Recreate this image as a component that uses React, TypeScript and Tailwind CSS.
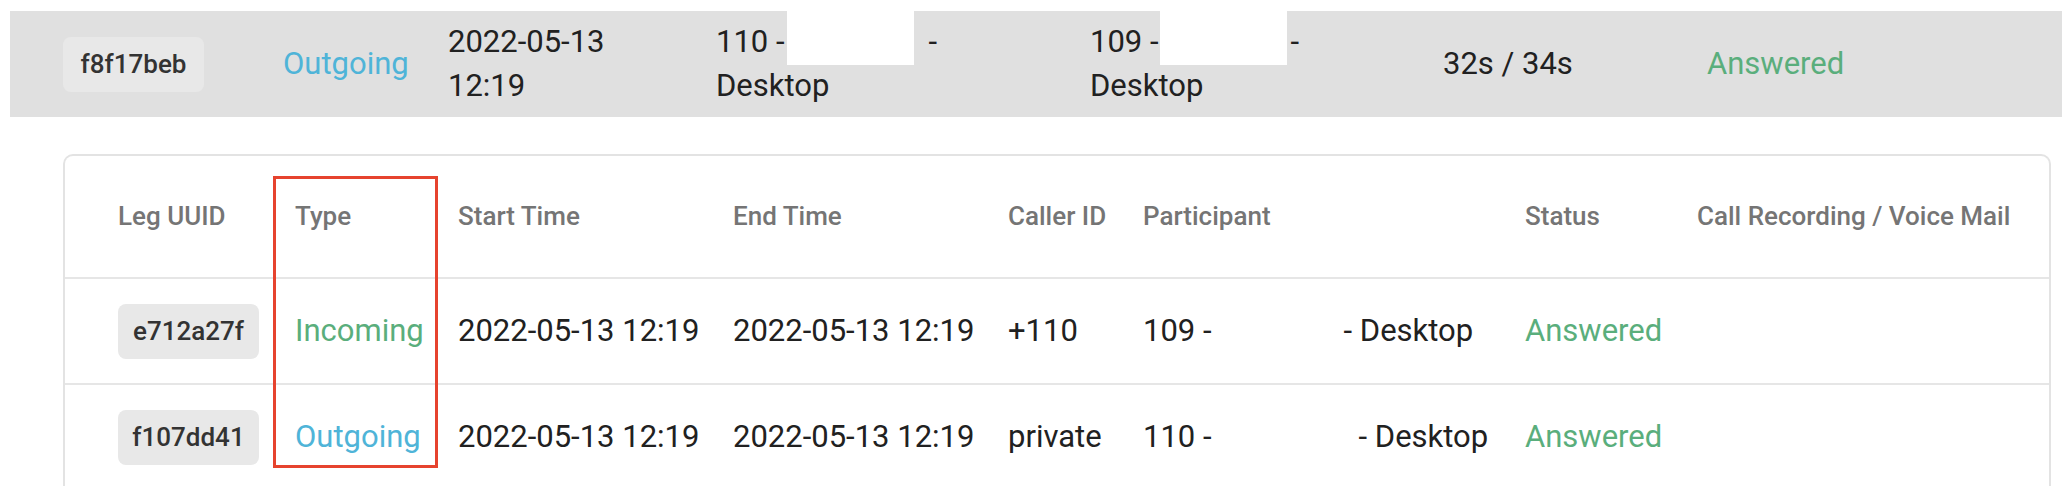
import React from 'react';

interface Leg {
  uuid: string;
  type: 'Incoming' | 'Outgoing';
  start: string;
  end: string;
  callerId: string;
  ext: string;
  gapClass: string;
  status: string;
}

const legs: Leg[] = [
  {
    uuid: 'e712a27f',
    type: 'Incoming',
    start: '2022-05-13 12:19',
    end: '2022-05-13 12:19',
    callerId: '+110',
    ext: '109 -',
    gapClass: 'w-[132px]',
    status: 'Answered',
  },
  {
    uuid: 'f107dd41',
    type: 'Outgoing',
    start: '2022-05-13 12:19',
    end: '2022-05-13 12:19',
    callerId: 'private',
    ext: '110 -',
    gapClass: 'w-[147px]',
    status: 'Answered',
  },
];

const headers = [
  'Leg UUID',
  'Type',
  'Start Time',
  'End Time',
  'Caller ID',
  'Participant',
  'Status',
  'Call Recording / Voice Mail',
];

const gridCols =
  'grid grid-cols-[177px_163px_275px_275px_135px_382px_172px_1fr] items-center pl-[53px]';

function UuidBadge({ value }: { value: string }) {
  return (
    <span className="inline-flex h-[55px] w-[141px] items-center justify-center rounded-[8px] bg-[#e8e8e8] text-[26px] font-medium text-[#333333]">
      {value}
    </span>
  );
}

// Name was blanked out in the screenshot
function Redacted({ className }: { className: string }) {
  return (
    <span className={`relative inline-block h-[44px] align-top ${className}`}>
      <span className="absolute inset-x-0 top-[-9px] h-[54px] bg-white" />
    </span>
  );
}

function TypeLabel({ type }: { type: Leg['type'] }) {
  return (
    <span className={type === 'Incoming' ? 'text-[#5aae7c]' : 'text-[#4fb4d8]'}>{type}</span>
  );
}

export default function App() {
  return (
    <div className="min-h-screen bg-white pt-[11px] font-['Roboto',sans-serif] text-[31px] text-[#212121]">
      {/* Call summary row */}
      <div className="ml-[10px] flex h-[106px] items-center bg-[#e0e0e0] pl-[53px]">
        <div className="w-[220px]">
          <UuidBadge value="f8f17beb" />
        </div>
        <div className="w-[165px]">
          <TypeLabel type="Outgoing" />
        </div>
        <div className="w-[268px] leading-[44px]">
          <div>2022-05-13</div>
          <div>12:19</div>
        </div>
        <div className="w-[374px] leading-[44px]">
          <div className="whitespace-nowrap">
            110 -<Redacted className="ml-[2px] mr-[15px] w-[127px]" />-
          </div>
          <div>Desktop</div>
        </div>
        <div className="w-[353px] leading-[44px]">
          <div className="whitespace-nowrap">
            109 -<Redacted className="ml-[1px] mr-[4px] w-[127px]" />-
          </div>
          <div>Desktop</div>
        </div>
        <div className="w-[264px]">32s / 34s</div>
        <div className="text-[#5aae7c]">Answered</div>
      </div>

      {/* Legs table */}
      <div className="relative ml-[63px] mt-[37px] w-[1988px] rounded-t-[10px] border-2 border-b-0 border-[#e3e3e3]">
        <div className={`${gridCols} h-[123px] border-b-2 border-[#e6e6e6] text-[26px] font-medium text-[#757575]`}>
          {headers.map((h) => (
            <div key={h} className="whitespace-nowrap">
              {h}
            </div>
          ))}
        </div>

        {legs.map((leg) => (
          <div
            key={leg.uuid}
            className={`${gridCols} h-[106px] border-b-2 border-[#e6e6e6] whitespace-nowrap`}
          >
            <div>
              <UuidBadge value={leg.uuid} />
            </div>
            <div>
              <TypeLabel type={leg.type} />
            </div>
            <div>{leg.start}</div>
            <div>{leg.end}</div>
            <div>{leg.callerId}</div>
            <div>
              {leg.ext}
              <span className={`inline-block ${leg.gapClass}`} />- Desktop
            </div>
            <div className="text-[#5aae7c]">{leg.status}</div>
            <div />
          </div>
        ))}

        {/* Highlight around the Type column */}
        <div className="absolute left-[208px] top-[20px] h-[292px] w-[165px] border-[3px] border-[#e6432e]" />
      </div>
    </div>
  );
}
